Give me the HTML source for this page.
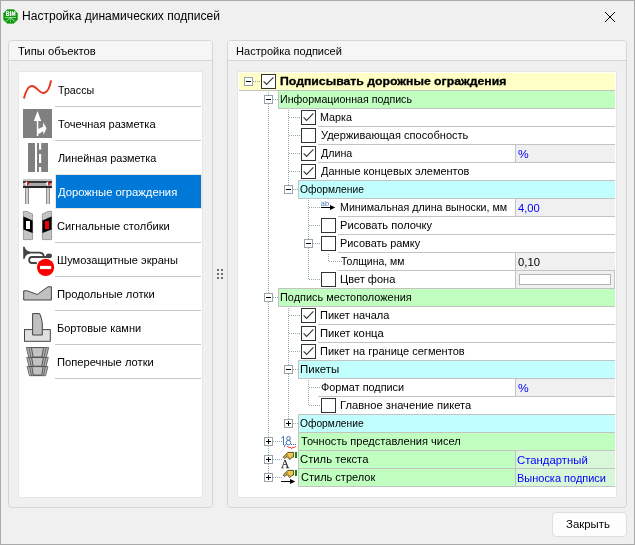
<!DOCTYPE html>
<html><head><meta charset="utf-8"><title>Настройка динамических подписей</title>
<style>
html,body{margin:0;padding:0;background:#f0f0f0;}
body{width:635px;height:545px;overflow:hidden;background:#f0f0f0;font-family:"Liberation Sans",sans-serif;position:relative;}
.a{position:absolute;white-space:nowrap;}
.win{left:0;top:0;width:633px;height:543px;border:1px solid #a9a9a9;background:#f0f0f0;}
.ttl{left:22px;top:8px;height:16px;line-height:16px;font-size:12.5px;color:#000;}
.grp{border:1px solid #d6d6d6;border-radius:4px;background:#f0f0f0;box-sizing:border-box;overflow:hidden;}
.gh{left:0;top:0;right:0;height:19px;background:#f6f6f6;border-bottom:1px solid #d6d6d6;}
.ght{font-size:12px;line-height:16px;height:16px;color:#000;}
.box{background:#fff;border:1px solid #e6e6e6;box-sizing:border-box;}
.li{font-size:12px;line-height:16px;height:16px;color:#000;left:58px;}
.sep{height:1px;background:#c6c6c6;left:55px;width:146px;}
.t{font-size:11px;line-height:13px;height:13px;color:#000;}
.tb{font-weight:bold;-webkit-text-stroke:0.3px #000;}
.v{color:#0000ff;}
.c{box-sizing:border-box;border-left:1px solid #c3c3c3;border-bottom:1px solid #c3c3c3;height:18px;}
.btn{left:552px;top:512px;width:75px;height:25px;box-sizing:border-box;border:1px solid #dedede;border-radius:4px;background:#fdfdfd;font-size:12px;line-height:23px;text-align:center;color:#000;}

</style></head><body>
<div class="a win"></div>
<svg class="a" style="left:2px;top:8px" width="18" height="18" viewBox="0 0 18 18"><polygon points="5.3,0.9 11.8,0.9 16.1,5.3 16.1,11.7 11.8,16 5.3,16 0.9,11.7 0.9,5.3" fill="#0f980f" stroke="#fbfbfb" stroke-width=".7"/><g fill="#fff" opacity=".95"><path d="M4 3.2 H6.6 Q7.4 3.2 7.4 4.2 Q7.4 5.3 6.8 5.5 Q7.5 5.7 7.5 6.8 Q7.5 8 6.6 8 H4 Z M5.1 4.1 V5.1 H6.2 V4.1 Z M5.1 6 V7.1 H6.3 V6 Z" fill-rule="evenodd"/><rect x="8" y="3.2" width="1.2" height="4.8"/><path d="M9.8 3.2 H11 L11.6 5.6 L12.2 3.2 H13.4 V8 H12.4 V5.4 L11.9 7.4 H11.3 L10.8 5.4 V8 H9.8 Z"/></g><rect x="3" y="9.3" width="11" height=".7" fill="#c8f0c8"/><g stroke="#e8ffe8" stroke-width=".7" fill="none"><path d="M8.5 9.8 L4.2 13.3 M8.5 9.8 L12.8 13.3"/><path d="M8.5 11.2 V15" stroke-dasharray="1 .9"/></g></svg>
<svg class="a" style="left:604px;top:11px" width="12" height="12" viewBox="0 0 12 12"><path d="M1 1 L11 11 M11 1 L1 11" stroke="#000" stroke-width="1" fill="none"/></svg>
<div class="a grp" style="left:8px;top:40px;width:205px;height:468px;"><div class="a gh"></div></div>
<div class="a box" style="left:18px;top:71px;width:185px;height:427px;"></div>
<div class="a sep" style="top:106px;"></div>
<div class="a sep" style="top:140px;"></div>
<div class="a sep" style="top:174px;"></div>
<div class="a" style="left:56px;top:175px;width:145px;height:33px;background:#0078d7;outline:1px solid #efe4da;"></div>
<div class="a sep" style="top:242px;"></div>
<div class="a sep" style="top:276px;"></div>
<div class="a sep" style="top:310px;"></div>
<div class="a sep" style="top:344px;"></div>
<div class="a sep" style="top:378px;"></div>
<svg class="a" style="left:0;top:0" width="60" height="400" viewBox="0 0 60 400">
<path d="M23.9 98.4 C26 90 28.4 85.7 32 85.9 C36.4 86.1 39.6 93.4 43.6 93.1 C47.6 92.8 50 86.4 51.1 80.4" fill="none" stroke="#e63a1e" stroke-width="2" stroke-linecap="butt"/>
<rect x="23" y="109" width="29" height="29" fill="#808080"/>
<g fill="#fff"><rect x="36.8" y="120" width="1.5" height="16"/><polygon points="37.5,111 33.8,121 41.2,121"/><path d="M38 129 L43.1 126.8 L43.3 122.6 L46.5 128.2 L43.6 134.8 L43.3 131.3 L38 134.2 Z"/></g>
<rect x="28" y="143" width="20" height="29" fill="#808080"/>
<g fill="#fff"><rect x="35" y="143" width="2" height="29"/><rect x="39" y="143" width="2.2" height="6.6"/><rect x="39" y="154" width="2.2" height="9"/><rect x="39" y="167" width="2.2" height="5"/></g>
<g><rect x="23" y="179" width="29" height="2" fill="#c6c6c6"/><rect x="23" y="181" width="29" height="2" fill="#383838"/><rect x="23" y="183" width="29" height="3" fill="#a8a8a8"/><rect x="23" y="186" width="29" height="2" fill="#262626"/><polygon points="24.4,183.6 27,181.3 27,185.9" fill="#fff"/><polygon points="27,181.3 29.4,183.6 27,185.9" fill="#f01010"/><polygon points="45.6,183.6 48.2,181.3 48.2,185.9" fill="#fff"/><polygon points="48.2,181.3 50.6,183.6 48.2,185.9" fill="#f01010"/><rect x="25" y="188" width="4" height="16" fill="#cfcfcf"/><rect x="25" y="188" width="1" height="16" fill="#8c8c8c"/><rect x="28" y="188" width="1" height="16" fill="#8c8c8c"/><rect x="46" y="188" width="4" height="16" fill="#cfcfcf"/><rect x="46" y="188" width="1" height="16" fill="#8c8c8c"/><rect x="49" y="188" width="1" height="16" fill="#8c8c8c"/></g>
<g stroke="#8a8a8a" stroke-width=".8"><polygon points="23.4,211.4 27,211.4 32.6,214 32.6,239.6 23.4,239.6" fill="#c4c4c4"/><polygon points="51.6,211.4 48,211.4 42.4,214 42.4,239.6 51.6,239.6" fill="#c4c4c4"/></g><polygon points="23.4,216.6 32.6,220.6 32.6,233 23.4,229.4" fill="#000"/><polygon points="51.6,216.6 42.4,220.6 42.4,233 51.6,229.4" fill="#000"/><rect x="26" y="221" width="4" height="8" fill="#fff"/><rect x="45" y="221" width="4" height="8" fill="#f00000"/>
<g fill="none" stroke="#444" stroke-width="1.8"><path d="M28 252.6 L39.6 252.6 C42.6 252.6 43.6 254.4 43.9 256.8"/><path d="M51 257 L32 257 C28.2 257 28.2 263 32 263 L36.8 263"/></g><path d="M23.1 246.8 L24.6 246.8 C25.4 249.6 27 251.3 30 251.7 L30 253.7 C27 253.9 25.4 255.6 24.5 259 L23.3 259 Z" fill="#444"/><ellipse cx="49" cy="255.8" rx="3" ry="2.4" fill="#444"/><circle cx="45.6" cy="267.3" r="8.6" fill="#fa0000"/><rect x="40" y="265.9" width="11.2" height="3.2" fill="#fff"/>
<polygon points="23.7,290.8 27.3,290.8 37.3,294.5 47.9,286.8 51.4,286.8 51.4,300 23.7,300" fill="#c0c0c0" stroke="#444" stroke-width="1"/>
<rect x="24.5" y="329.6" width="25.8" height="11.7" fill="#e0e0e0" stroke="#444" stroke-width="1"/><path d="M32.6 335 L32.6 313.6 L39.6 313.6 C41 316.5 42.2 320.5 42.3 325 L42.3 335 Z" fill="#c0c0c0" stroke="#444" stroke-width="1"/>
<g stroke="#505050" stroke-width=".8"><polygon points="26.3,347.5 48.7,347.5 46.2,357.7 28.8,357.7" fill="#b4b4b4"/>
<path d="M28.8 347.5 L31.0 357.7 M46.2 347.5 L44.0 357.7" fill="none"/>
<polygon points="31.4,347.6 43.6,347.6 41.9,357.1 33.1,357.1" fill="#c2c2c2" stroke="#484848" stroke-width=".9"/></g>
<g stroke="#505050" stroke-width=".8"><polygon points="26.7,357.4 48.3,357.4 45.9,366.8 29.1,366.8" fill="#b4b4b4"/>
<path d="M29.2 357.4 L31.3 366.8 M45.8 357.4 L43.7 366.8" fill="none"/>
<polygon points="31.6,357.5 43.4,357.5 41.8,366.2 33.2,366.2" fill="#c2c2c2" stroke="#484848" stroke-width=".9"/></g>
<g stroke="#505050" stroke-width=".8"><polygon points="27.1,366.5 47.9,366.5 45.6,375.7 29.4,375.7" fill="#b4b4b4"/>
<path d="M29.6 366.5 L31.6 375.7 M45.4 366.5 L43.4 375.7" fill="none"/>
<polygon points="31.8,366.6 43.2,366.6 41.7,375.1 33.3,375.1" fill="#c2c2c2" stroke="#484848" stroke-width=".9"/></g>
</svg>
<div class="a" style="left:217px;top:269px;width:2px;height:2px;background:#707070;"></div>
<div class="a" style="left:217px;top:273px;width:2px;height:2px;background:#707070;"></div>
<div class="a" style="left:217px;top:277px;width:2px;height:2px;background:#707070;"></div>
<div class="a" style="left:221px;top:269px;width:2px;height:2px;background:#707070;"></div>
<div class="a" style="left:221px;top:273px;width:2px;height:2px;background:#707070;"></div>
<div class="a" style="left:221px;top:277px;width:2px;height:2px;background:#707070;"></div>
<div class="a grp" style="left:227px;top:40px;width:400px;height:468px;"><div class="a gh"></div></div>
<div class="a box" style="left:237px;top:71px;width:380px;height:427px;"></div>
<div class="a" style="left:239px;top:73px;width:376px;height:17px;background:#ffffc6;border-bottom:1px solid #c3c3c3;"></div>
<div class="a c" style="left:278px;top:90px;width:337px;height:19px;border-top:1px solid #c3c3c3;background:#c1ffc1;"></div>
<div class="a" style="left:318px;top:126px;width:297px;height:1px;background:#c3c3c3;"></div>
<div class="a" style="left:318px;top:144px;width:297px;height:1px;background:#c3c3c3;"></div>
<div class="a" style="left:318px;top:162px;width:297px;height:1px;background:#c3c3c3;"></div>
<div class="a c" style="left:515px;top:145px;width:100px;background:#f0f0f0;"></div>
<div class="a" style="left:318px;top:180px;width:297px;height:1px;background:#c3c3c3;"></div>
<div class="a c" style="left:298px;top:180px;width:317px;height:19px;border-top:1px solid #c3c3c3;background:#c1ffff;"></div>
<div class="a" style="left:338px;top:216px;width:277px;height:1px;background:#c3c3c3;"></div>
<div class="a c" style="left:515px;top:199px;width:100px;background:#f0f0f0;"></div>
<div class="a" style="left:338px;top:234px;width:277px;height:1px;background:#c3c3c3;"></div>
<div class="a" style="left:338px;top:252px;width:277px;height:1px;background:#c3c3c3;"></div>
<div class="a" style="left:338px;top:270px;width:277px;height:1px;background:#c3c3c3;"></div>
<div class="a c" style="left:515px;top:253px;width:100px;background:#f0f0f0;"></div>
<div class="a" style="left:338px;top:288px;width:277px;height:1px;background:#c3c3c3;"></div>
<div class="a c" style="left:515px;top:271px;width:100px;background:#f0f0f0;"></div>
<div class="a" style="left:519px;top:274px;width:92px;height:11px;box-sizing:border-box;border:1px solid #b4b4b4;background:#fff;"></div>
<div class="a" style="left:614px;top:271px;width:1px;height:17px;background:#c3c3c3;"></div>
<div class="a c" style="left:278px;top:288px;width:337px;height:19px;border-top:1px solid #c3c3c3;background:#c1ffc1;"></div>
<div class="a" style="left:318px;top:324px;width:297px;height:1px;background:#c3c3c3;"></div>
<div class="a" style="left:318px;top:342px;width:297px;height:1px;background:#c3c3c3;"></div>
<div class="a" style="left:318px;top:360px;width:297px;height:1px;background:#c3c3c3;"></div>
<div class="a c" style="left:298px;top:360px;width:317px;height:19px;border-top:1px solid #c3c3c3;background:#c1ffff;"></div>
<div class="a" style="left:318px;top:396px;width:297px;height:1px;background:#c3c3c3;"></div>
<div class="a c" style="left:515px;top:379px;width:100px;background:#f0f0f0;"></div>
<div class="a" style="left:338px;top:414px;width:277px;height:1px;background:#c3c3c3;"></div>
<div class="a c" style="left:298px;top:414px;width:317px;height:19px;border-top:1px solid #c3c3c3;background:#c1ffff;"></div>
<div class="a c" style="left:298px;top:432px;width:317px;height:19px;border-top:1px solid #c3c3c3;background:#c1ffc1;"></div>
<div class="a c" style="left:298px;top:450px;width:317px;height:19px;border-top:1px solid #c3c3c3;background:#c1ffc1;"></div>
<div class="a c" style="left:515px;top:451px;width:100px;background:#d8f6d8;"></div>
<div class="a c" style="left:298px;top:468px;width:317px;height:19px;border-top:1px solid #c3c3c3;background:#c1ffc1;"></div>
<div class="a c" style="left:515px;top:469px;width:100px;background:#d8f6d8;"></div>
<div class="a btn"></div>
<div class="a" style="left:0;top:0;width:635px;height:545px;will-change:transform;">
<svg class="a" style="left:0;top:0;" width="635" height="545" viewBox="0 0 635 545"><g stroke="#96a8b2" stroke-width="1" stroke-dasharray="1 1" shape-rendering="crispEdges" fill="none">
<line x1="268.5" y1="92" x2="268.5" y2="478"/>
<line x1="288.5" y1="110" x2="288.5" y2="190"/>
<line x1="288.5" y1="308" x2="288.5" y2="424"/>
<line x1="308.5" y1="200" x2="308.5" y2="280"/>
<line x1="308.5" y1="380" x2="308.5" y2="406"/>
<line x1="328.5" y1="254" x2="328.5" y2="262"/>
<line x1="253" y1="81.5" x2="261" y2="81.5"/>
<line x1="273" y1="99.5" x2="278" y2="99.5"/>
<line x1="289" y1="117.5" x2="301" y2="117.5"/>
<line x1="289" y1="135.5" x2="301" y2="135.5"/>
<line x1="289" y1="153.5" x2="301" y2="153.5"/>
<line x1="289" y1="171.5" x2="301" y2="171.5"/>
<line x1="293" y1="189.5" x2="298" y2="189.5"/>
<line x1="309" y1="207.5" x2="321" y2="207.5"/>
<line x1="309" y1="225.5" x2="321" y2="225.5"/>
<line x1="313" y1="243.5" x2="321" y2="243.5"/>
<line x1="329" y1="261.5" x2="342" y2="261.5"/>
<line x1="309" y1="279.5" x2="321" y2="279.5"/>
<line x1="273" y1="297.5" x2="278" y2="297.5"/>
<line x1="289" y1="315.5" x2="301" y2="315.5"/>
<line x1="289" y1="333.5" x2="301" y2="333.5"/>
<line x1="289" y1="351.5" x2="301" y2="351.5"/>
<line x1="293" y1="369.5" x2="298" y2="369.5"/>
<line x1="309" y1="387.5" x2="321" y2="387.5"/>
<line x1="309" y1="405.5" x2="321" y2="405.5"/>
<line x1="293" y1="423.5" x2="298" y2="423.5"/>
<line x1="273" y1="441.5" x2="282" y2="441.5"/>
<line x1="273" y1="459.5" x2="282" y2="459.5"/>
<line x1="273" y1="477.5" x2="282" y2="477.5"/>
</g>
<rect x="244.5" y="77.5" width="8" height="8" fill="#fff" stroke="#96a4ad" stroke-width="1" rx=".8" shape-rendering="crispEdges"/>
<rect x="246" y="81" width="5" height="1" fill="#000" shape-rendering="crispEdges"/>
<rect x="264.5" y="95.5" width="8" height="8" fill="#fff" stroke="#96a4ad" stroke-width="1" rx=".8" shape-rendering="crispEdges"/>
<rect x="266" y="99" width="5" height="1" fill="#000" shape-rendering="crispEdges"/>
<rect x="284.5" y="185.5" width="8" height="8" fill="#fff" stroke="#96a4ad" stroke-width="1" rx=".8" shape-rendering="crispEdges"/>
<rect x="286" y="189" width="5" height="1" fill="#000" shape-rendering="crispEdges"/>
<rect x="304.5" y="239.5" width="8" height="8" fill="#fff" stroke="#96a4ad" stroke-width="1" rx=".8" shape-rendering="crispEdges"/>
<rect x="306" y="243" width="5" height="1" fill="#000" shape-rendering="crispEdges"/>
<rect x="264.5" y="293.5" width="8" height="8" fill="#fff" stroke="#96a4ad" stroke-width="1" rx=".8" shape-rendering="crispEdges"/>
<rect x="266" y="297" width="5" height="1" fill="#000" shape-rendering="crispEdges"/>
<rect x="284.5" y="365.5" width="8" height="8" fill="#fff" stroke="#96a4ad" stroke-width="1" rx=".8" shape-rendering="crispEdges"/>
<rect x="286" y="369" width="5" height="1" fill="#000" shape-rendering="crispEdges"/>
<rect x="284.5" y="419.5" width="8" height="8" fill="#fff" stroke="#96a4ad" stroke-width="1" rx=".8" shape-rendering="crispEdges"/>
<rect x="286" y="423" width="5" height="1" fill="#000" shape-rendering="crispEdges"/>
<rect x="288" y="421" width="1" height="5" fill="#000" shape-rendering="crispEdges"/>
<rect x="264.5" y="437.5" width="8" height="8" fill="#fff" stroke="#96a4ad" stroke-width="1" rx=".8" shape-rendering="crispEdges"/>
<rect x="266" y="441" width="5" height="1" fill="#000" shape-rendering="crispEdges"/>
<rect x="268" y="439" width="1" height="5" fill="#000" shape-rendering="crispEdges"/>
<rect x="264.5" y="455.5" width="8" height="8" fill="#fff" stroke="#96a4ad" stroke-width="1" rx=".8" shape-rendering="crispEdges"/>
<rect x="266" y="459" width="5" height="1" fill="#000" shape-rendering="crispEdges"/>
<rect x="268" y="457" width="1" height="5" fill="#000" shape-rendering="crispEdges"/>
<rect x="264.5" y="473.5" width="8" height="8" fill="#fff" stroke="#96a4ad" stroke-width="1" rx=".8" shape-rendering="crispEdges"/>
<rect x="266" y="477" width="5" height="1" fill="#000" shape-rendering="crispEdges"/>
<rect x="268" y="475" width="1" height="5" fill="#000" shape-rendering="crispEdges"/>
<rect x="261.5" y="74.5" width="14" height="14" fill="#fff" stroke="#333" stroke-width="1" shape-rendering="crispEdges"/>
<path d="M263.6 81.4 L266.6 84.4 L273.4 77.4" fill="none" stroke="#383838" stroke-width="1.15"/>
<rect x="301.5" y="110.5" width="14" height="14" fill="#fff" stroke="#333" stroke-width="1" shape-rendering="crispEdges"/>
<path d="M303.6 117.4 L306.6 120.4 L313.4 113.4" fill="none" stroke="#383838" stroke-width="1.15"/>
<rect x="301.5" y="128.5" width="14" height="14" fill="#fff" stroke="#333" stroke-width="1" shape-rendering="crispEdges"/>
<rect x="301.5" y="146.5" width="14" height="14" fill="#fff" stroke="#333" stroke-width="1" shape-rendering="crispEdges"/>
<path d="M303.6 153.4 L306.6 156.4 L313.4 149.4" fill="none" stroke="#383838" stroke-width="1.15"/>
<rect x="301.5" y="164.5" width="14" height="14" fill="#fff" stroke="#333" stroke-width="1" shape-rendering="crispEdges"/>
<path d="M303.6 171.4 L306.6 174.4 L313.4 167.4" fill="none" stroke="#383838" stroke-width="1.15"/>
<rect x="321.5" y="218.5" width="14" height="14" fill="#fff" stroke="#333" stroke-width="1" shape-rendering="crispEdges"/>
<rect x="321.5" y="236.5" width="14" height="14" fill="#fff" stroke="#333" stroke-width="1" shape-rendering="crispEdges"/>
<rect x="321.5" y="272.5" width="14" height="14" fill="#fff" stroke="#333" stroke-width="1" shape-rendering="crispEdges"/>
<rect x="301.5" y="308.5" width="14" height="14" fill="#fff" stroke="#333" stroke-width="1" shape-rendering="crispEdges"/>
<path d="M303.6 315.4 L306.6 318.4 L313.4 311.4" fill="none" stroke="#383838" stroke-width="1.15"/>
<rect x="301.5" y="326.5" width="14" height="14" fill="#fff" stroke="#333" stroke-width="1" shape-rendering="crispEdges"/>
<path d="M303.6 333.4 L306.6 336.4 L313.4 329.4" fill="none" stroke="#383838" stroke-width="1.15"/>
<rect x="301.5" y="344.5" width="14" height="14" fill="#fff" stroke="#333" stroke-width="1" shape-rendering="crispEdges"/>
<path d="M303.6 351.4 L306.6 354.4 L313.4 347.4" fill="none" stroke="#383838" stroke-width="1.15"/>
<rect x="321.5" y="398.5" width="14" height="14" fill="#fff" stroke="#333" stroke-width="1" shape-rendering="crispEdges"/>
<text x="320.8" y="205.5" font-family="Liberation Sans, sans-serif" font-size="7.4" fill="#4377bd">ab</text>
<rect x="321" y="207" width="10" height="1" fill="#000" shape-rendering="crispEdges"/>
<polygon points="330.0,204.9 335.3,207.5 330.0,210.1" fill="#000"/>
<g fill="none" stroke="#4377bd" stroke-width="1"><path d="M281.4 438.4 L283.5 436.3 L283.5 445.0"/><path d="M285.4 444.2 L284.3 447.2"/><ellipse cx="288.5" cy="438.4" rx="1.9" ry="1.9"/><ellipse cx="288.5" cy="442.6" rx="2.3" ry="2.3"/></g>
<rect x="291" y="444" width="1" height="1" fill="#4377bd"/>
<rect x="293" y="444" width="1" height="1" fill="#4377bd"/>
<rect x="295" y="444" width="1" height="1" fill="#4377bd"/>
<path d="M287.4 446.0 C287.4 447.0 288.2 447.4 289.2 447.4 L290 447.4 C290.8 447.4 291.5 447.8 291.6 448.8 C291.7 447.8 292.4 447.4 293.2 447.4 L294 447.4 C295 447.4 295.7 447.0 295.7 446.0" fill="none" stroke="#ff1010" stroke-width=".9"/>
<polygon points="283.2,457.2 287.8,452.4 293.6,452.4 293.6,457.0 291.8,457.4 289.8,459.6 287.0,456.4 284.6,458.6" fill="#efc64e" stroke="#2e2600" stroke-width=".8"/>
<path d="M284.4 457.4 L287.6 454.2 M287.6 455.4 L290.2 458.4" stroke="#2e2600" stroke-width=".6" stroke-dasharray=".9 .9" fill="none"/>
<rect x="295" y="452" width="2" height="6" fill="#0f8a0f"/>
<text x="280.9" y="467.8" font-family="Liberation Serif, serif" font-size="11.5" fill="#2a2a2a" stroke="#2a2a2a" stroke-width=".25">A</text>
<polygon points="283.2,475.2 287.8,470.4 293.6,470.4 293.6,475.0 291.8,475.4 289.8,477.6 287.0,474.4 284.6,476.6" fill="#efc64e" stroke="#2e2600" stroke-width=".8"/>
<path d="M284.4 475.4 L287.6 472.2 M287.6 473.4 L290.2 476.4" stroke="#2e2600" stroke-width=".6" stroke-dasharray=".9 .9" fill="none"/>
<rect x="295" y="470" width="2" height="6" fill="#0f8a0f"/>
<rect x="281" y="481" width="10" height="1" fill="#000" shape-rendering="crispEdges"/>
<polygon points="290.0,478.9 295.3,481.5 290.0,484.1" fill="#000"/></svg>
<div class="a ttl" style="font-size:12px;left:21.76px;transform-origin:0 0;transform:scaleX(1.0046);">Настройка динамических подписей</div>
<div class="a ght" style="left:18px;top:43px;font-size:11.5px;left:17.86px;transform-origin:0 0;transform:scaleX(0.9774);">Типы объектов</div>
<div class="a li" style="top:82px;font-size:11.5px;left:57.77px;transform-origin:0 0;transform:scaleX(0.9283);">Трассы</div>
<div class="a li" style="top:116px;font-size:11.5px;left:57.76px;transform-origin:0 0;transform:scaleX(0.9641);">Точечная разметка</div>
<div class="a li" style="top:150px;font-size:11.5px;left:57.94px;transform-origin:0 0;transform:scaleX(0.9434);">Линейная разметка</div>
<div class="a li" style="top:184px;color:#fff;font-size:11.5px;left:57.94px;transform-origin:0 0;transform:scaleX(0.9768);">Дорожные ограждения</div>
<div class="a li" style="top:218px;font-size:11.5px;left:57.46px;transform-origin:0 0;transform:scaleX(0.9655);">Сигнальные столбики</div>
<div class="a li" style="top:252px;font-size:11.5px;left:57.10px;transform-origin:0 0;transform:scaleX(0.9616);">Шумозащитные экраны</div>
<div class="a li" style="top:286px;font-size:11.5px;left:57.15px;transform-origin:0 0;transform:scaleX(0.9751);">Продольные лотки</div>
<div class="a li" style="top:320px;font-size:11.5px;left:57.10px;transform-origin:0 0;transform:scaleX(0.9563);">Бортовые камни</div>
<div class="a li" style="top:354px;font-size:11.5px;left:57.15px;transform-origin:0 0;transform:scaleX(0.9716);">Поперечные лотки</div>
<div class="a ght" style="left:238px;top:43px;font-size:11.5px;left:236.40px;transform-origin:0 0;transform:scaleX(0.9619);">Настройка подписей</div>
<div class="a t tb" style="left:281px;top:75.3px;font-size:11px;left:279.73px;transform-origin:0 0;transform:scaleX(1.1141);">Подписывать дорожные ограждения</div>
<div class="a t" style="left:281px;top:93.3px;font-size:11px;left:279.95px;transform-origin:0 0;transform:scaleX(0.9676);">Информационная подпись</div>
<div class="a t" style="left:321px;top:111.3px;font-size:11px;left:320.44px;transform-origin:0 0;transform:scaleX(0.9772);">Марка</div>
<div class="a t" style="left:321px;top:129.3px;font-size:11px;left:320.95px;transform-origin:0 0;transform:scaleX(1.0051);">Удерживающая способность</div>
<div class="a t v" style="left:518px;top:148px;font-size:11px;left:517.69px;transform-origin:0 0;transform:scaleX(1.0924);">%</div>
<div class="a t" style="left:321px;top:147.3px;font-size:11px;left:321.14px;transform-origin:0 0;transform:scaleX(0.9705);">Длина</div>
<div class="a t" style="left:321px;top:165.3px;font-size:11px;left:321.14px;transform-origin:0 0;transform:scaleX(0.9957);">Данные концевых элементов</div>
<div class="a t" style="left:301px;top:183.3px;font-size:11px;left:300.13px;transform-origin:0 0;transform:scaleX(0.9355);">Оформление</div>
<div class="a t v" style="left:518px;top:202px;font-size:11px;left:518.05px;transform-origin:0 0;transform:scaleX(1.0196);">4,00</div>
<div class="a t" style="left:341px;top:201.3px;font-size:11px;left:339.95px;transform-origin:0 0;transform:scaleX(0.9690);">Минимальная длина выноски, мм</div>
<div class="a t" style="left:341px;top:219.3px;font-size:11px;left:339.92px;transform-origin:0 0;transform:scaleX(1.0112);">Рисовать полочку</div>
<div class="a t" style="left:341px;top:237.3px;font-size:11px;left:339.93px;transform-origin:0 0;transform:scaleX(0.9912);">Рисовать рамку</div>
<div class="a t" style="left:518px;top:256px;font-size:11px;left:517.92px;transform-origin:0 0;transform:scaleX(1.0258);">0,10</div>
<div class="a t" style="left:341px;top:255.3px;font-size:11px;left:341.32px;transform-origin:0 0;transform:scaleX(0.9493);">Толщина, мм</div>
<div class="a t" style="left:341px;top:273.4px;font-size:11px;left:339.92px;transform-origin:0 0;transform:scaleX(1.0037);">Цвет фона</div>
<div class="a t" style="left:281px;top:291.4px;font-size:11px;left:279.93px;transform-origin:0 0;transform:scaleX(0.9913);">Подпись местоположения</div>
<div class="a t" style="left:321px;top:309.4px;font-size:11px;left:320.42px;transform-origin:0 0;transform:scaleX(1.0029);">Пикет начала</div>
<div class="a t" style="left:321px;top:327.4px;font-size:11px;left:320.41px;transform-origin:0 0;transform:scaleX(1.0226);">Пикет конца</div>
<div class="a t" style="left:321px;top:345.4px;font-size:11px;left:320.42px;transform-origin:0 0;transform:scaleX(1.0034);">Пикет на границе сегментов</div>
<div class="a t" style="left:301px;top:363.4px;font-size:11px;left:299.89px;transform-origin:0 0;transform:scaleX(1.0418);">Пикеты</div>
<div class="a t v" style="left:518px;top:382px;font-size:11px;left:517.69px;transform-origin:0 0;transform:scaleX(1.0924);">%</div>
<div class="a t" style="left:321px;top:381.4px;font-size:11px;left:320.98px;transform-origin:0 0;transform:scaleX(0.9880);">Формат подписи</div>
<div class="a t" style="left:341px;top:399.4px;font-size:11px;left:339.91px;transform-origin:0 0;transform:scaleX(1.0166);">Главное значение пикета</div>
<div class="a t" style="left:301px;top:417.4px;font-size:11px;left:300.13px;transform-origin:0 0;transform:scaleX(0.9325);">Оформление</div>
<div class="a t" style="left:301px;top:435.4px;font-size:11px;left:300.81px;transform-origin:0 0;transform:scaleX(1.0065);">Точность представления чисел</div>
<div class="a t v" style="left:518px;top:454px;font-size:11px;left:517.48px;transform-origin:0 0;transform:scaleX(1.0323);">Стандартный</div>
<div class="a t" style="left:301px;top:453.4px;font-size:11px;left:300.49px;transform-origin:0 0;transform:scaleX(1.0235);">Стиль текста</div>
<div class="a t v" style="left:518px;top:472px;font-size:11px;left:517.13px;transform-origin:0 0;transform:scaleX(0.9980);">Выноска подписи</div>
<div class="a t" style="left:301px;top:471.4px;font-size:11px;left:300.50px;transform-origin:0 0;transform:scaleX(1.0003);">Стиль стрелок</div>
<div class="a" style="top:516px;line-height:16px;height:16px;color:#000;font-size:11.5px;left:566.43px;transform-origin:0 0;transform:scaleX(0.9911);">Закрыть</div>
</div>
</body></html>
